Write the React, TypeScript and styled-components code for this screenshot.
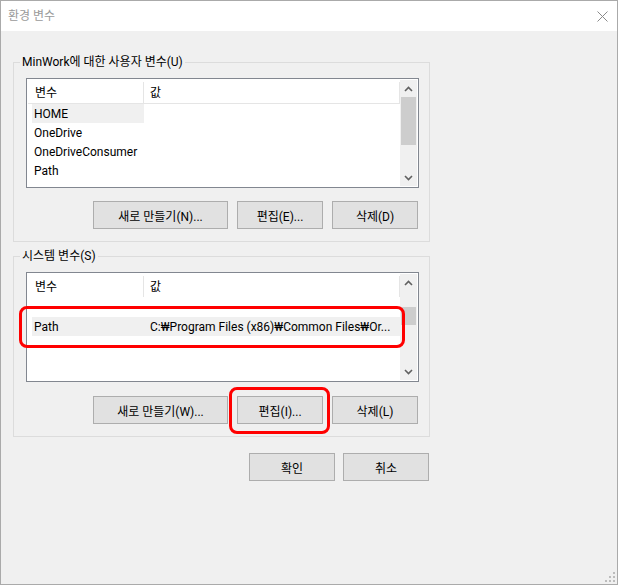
import React from 'react';
import styled, { createGlobalStyle } from 'styled-components';

const GlobalStyle = createGlobalStyle`
  body {
    margin: 0;
    background: #ffffff;
    font-family: Roboto, "Noto Sans CJK KR", sans-serif;
    font-size: 12px;
    color: #000;
  }
`;

const Window = styled.div`
  position: relative;
  display: flex;
  flex-direction: column;
  box-sizing: border-box;
  width: 618px;
  height: 585px;
  border: 1px solid #aaaaaa;
  background: #f0f0f0;
`;

const TitleBar = styled.div`
  display: flex;
  align-items: center;
  justify-content: space-between;
  height: 30px;
  padding: 0 9px 0 7px;
  background: #ffffff;
`;

const Title = styled.span`
  color: #9a9a9a;
  line-height: 16px;
`;

const Body = styled.div`
  display: flex;
  flex-direction: column;
  align-items: flex-start;
  padding: 23px 0 0 12px;
`;

const GroupBox = styled.fieldset`
  box-sizing: border-box;
  width: 417px;
  min-width: 0;
  margin: 0;
  border: 1px solid #dcdcdc;
  padding: 8px 10px 12px 12px;

  & + & {
    margin-top: 6px;
  }
`;

const Legend = styled.legend`
  margin-left: -6px;
  padding: 0 2px;
  line-height: 16px;
`;

const ListBox = styled.div<{ $height: number }>`
  display: flex;
  box-sizing: border-box;
  width: 100%;
  height: ${(p) => p.$height}px;
  border: 1px solid #828790;
  padding: 1px;
  background: #ffffff;
`;

const ListContent = styled.div`
  flex: 1;
  min-width: 0;
  overflow: hidden;
`;

const Header = styled.div<{ $line: boolean }>`
  display: flex;
  height: 23px;
  border-bottom: 1px solid ${(p) => (p.$line ? '#e5e5e5' : 'transparent')};
`;

const HeaderCell = styled.div<{ $width?: number }>`
  display: flex;
  align-items: center;
  box-sizing: border-box;
  ${(p) => (p.$width ? `width: ${p.$width}px;` : 'flex: 1;')}
  margin: 2px 0 0;
  border-right: 1px solid #e5e5e5;
  padding: 1px 0 0 ${(p) => (p.$width ? 7 : 6)}px;
  line-height: 16px;
`;

const Row = styled.div<{ $selected?: boolean }>`
  display: flex;
  height: 19px;
  margin-left: 4px;
  background: ${(p) => (p.$selected ? '#f0f0f0' : 'transparent')};
`;

const NameCell = styled.div<{ $selected?: boolean }>`
  box-sizing: border-box;
  width: 112px;
  padding: 1px 0 0 2px;
  line-height: 18px;
  white-space: nowrap;
  background: ${(p) => (p.$selected ? '#f0f0f0' : 'transparent')};
`;

const ValueCell = styled.div`
  flex: 1;
  min-width: 0;
  padding: 1px 0 0 6px;
  line-height: 18px;
  white-space: nowrap;
  overflow: hidden;
`;

const ScrollBar = styled.div`
  display: flex;
  flex-direction: column;
  width: 17px;
  background: #f0f0f0;
`;

const ArrowButton = styled.div`
  display: flex;
  align-items: center;
  justify-content: center;
  height: 17px;
  flex-shrink: 0;
`;

const Track = styled.div`
  flex: 1;
  padding: 0 1px;
`;

const Thumb = styled.div<{ $offset: number; $size: number }>`
  height: ${(p) => p.$size}px;
  margin-top: ${(p) => p.$offset}px;
  background: #cdcdcd;
`;

const ButtonRow = styled.div<{ $top: number }>`
  display: flex;
  justify-content: flex-end;
  gap: 9px;
  margin: ${(p) => p.$top}px 1px 0 0;
`;

const Button = styled.button<{ $width: number }>`
  box-sizing: border-box;
  width: ${(p) => p.$width}px;
  height: 28px;
  border: 1px solid #adadad;
  padding: 1px 0 0;
  background: #e1e1e1;
  color: #000;
  font-family: inherit;
  font-size: 12px;
`;

const DialogButtons = styled.div`
  display: flex;
  justify-content: flex-end;
  gap: 8px;
  box-sizing: border-box;
  width: 417px;
  margin-top: 16px;
  padding-right: 1px;
`;

const Highlight = styled.div<{ $x: number; $y: number; $w: number; $h: number }>`
  position: absolute;
  left: ${(p) => p.$x}px;
  top: ${(p) => p.$y}px;
  box-sizing: border-box;
  width: ${(p) => p.$w}px;
  height: ${(p) => p.$h}px;
  border: 3px solid #ff0000;
  border-radius: 8px;
  pointer-events: none;
`;

const Grip = styled.svg`
  position: absolute;
  right: 2px;
  bottom: 2px;
`;

const Chevron = ({ up }: { up?: boolean }) => (
  <svg width='9' height='6' viewBox='0 0 9 6'>
    <polyline
      points={up ? '1,5 4.5,1.5 8,5' : '1,1 4.5,4.5 8,1'}
      fill='none'
      stroke='#606060'
      strokeWidth='1.6'
    />
  </svg>
);

type Item = { name: string; value?: string; selected?: 'name' | 'row' };

const VarList = ({
  items,
  headerLine,
  thumbOffset,
  thumbSize,
}: {
  items: Item[];
  headerLine: boolean;
  thumbOffset: number;
  thumbSize: number;
}) => (
  <ListBox $height={110}>
    <ListContent>
      <Header $line={headerLine}>
        <HeaderCell $width={116}>변수</HeaderCell>
        <HeaderCell>값</HeaderCell>
      </Header>
      {items.map((item, i) => (
        <Row key={i} $selected={item.selected === 'row'}>
          <NameCell $selected={item.selected === 'name'}>{item.name}</NameCell>
          <ValueCell>{item.value}</ValueCell>
        </Row>
      ))}
    </ListContent>
    <ScrollBar>
      <ArrowButton>
        <Chevron up />
      </ArrowButton>
      <Track>
        <Thumb $offset={thumbOffset} $size={thumbSize} />
      </Track>
      <ArrowButton>
        <Chevron />
      </ArrowButton>
    </ScrollBar>
  </ListBox>
);

const userVars: Item[] = [
  { name: 'HOME', selected: 'name' },
  { name: 'OneDrive' },
  { name: 'OneDriveConsumer' },
  { name: 'Path' },
];

const systemVars: Item[] = [
  { name: '' },
  { name: 'Path', value: 'C:₩Program Files (x86)₩Common Files₩Or...', selected: 'row' },
];

const App = () => (
  <>
    <GlobalStyle />
    <Window>
      <TitleBar>
        <Title>환경 변수</Title>
        <svg width='11' height='11' viewBox='0 0 11 11'>
          <path d='M0.5 0.5 L10.5 10.5 M10.5 0.5 L0.5 10.5' stroke='#8a8a8a' strokeWidth='1' />
        </svg>
      </TitleBar>
      <Body>
        <GroupBox>
          <Legend>MinWork에 대한 사용자 변수(U)</Legend>
          <VarList items={userVars} headerLine thumbOffset={0} thumbSize={48} />
          <ButtonRow $top={13}>
            <Button $width={135}>새로 만들기(N)...</Button>
            <Button $width={86}>편집(E)...</Button>
            <Button $width={86}>삭제(D)</Button>
          </ButtonRow>
        </GroupBox>
        <GroupBox>
          <Legend>시스템 변수(S)</Legend>
          <VarList items={systemVars} headerLine={false} thumbOffset={16} thumbSize={18} />
          <ButtonRow $top={14}>
            <Button $width={135}>새로 만들기(W)...</Button>
            <Button $width={86}>편집(I)...</Button>
            <Button $width={86}>삭제(L)</Button>
          </ButtonRow>
        </GroupBox>
        <DialogButtons>
          <Button $width={86}>확인</Button>
          <Button $width={86}>취소</Button>
        </DialogButtons>
      </Body>
      <Highlight $x={18} $y={305} $w={386} $h={42} />
      <Highlight $x={228} $y={386} $w={101} $h={47} />
      <Grip width='10' height='10' viewBox='0 0 10 10'>
        <g fill='#bcbcbc'>
          <rect x='8' y='0' width='2' height='2' />
          <rect x='4' y='4' width='2' height='2' />
          <rect x='8' y='4' width='2' height='2' />
          <rect x='0' y='8' width='2' height='2' />
          <rect x='4' y='8' width='2' height='2' />
          <rect x='8' y='8' width='2' height='2' />
        </g>
      </Grip>
    </Window>
  </>
);

export default App;
